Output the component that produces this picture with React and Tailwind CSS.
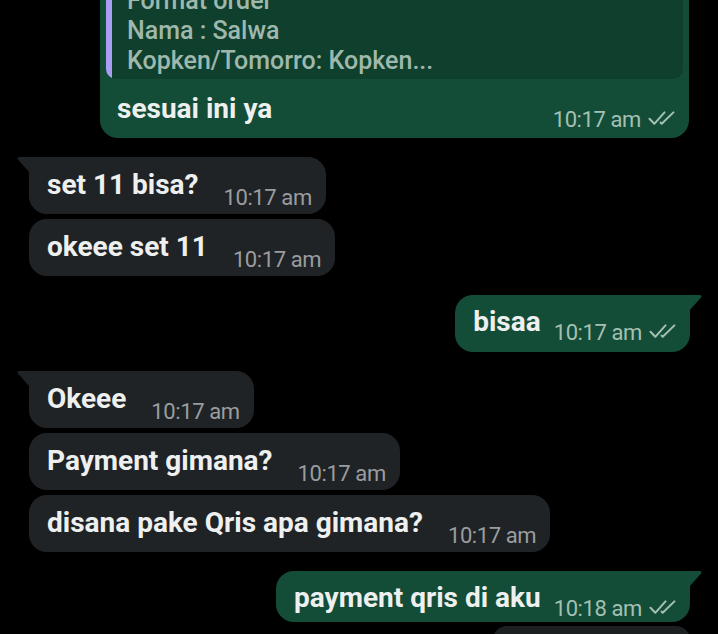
import React from 'react';

function Ticks({ className = '' }) {
  return (
    <svg viewBox="0 0 27 14" className={`h-[14px] w-[27px] shrink-0 ${className}`} fill="none">
      <path d="M1.5 7.8l4.8 5L16.5 1.4" stroke="#a3c0b3" strokeWidth="2" strokeLinecap="round" strokeLinejoin="round" />
      <path d="M12.6 11.6l1.1 1.2L25.4 1.4" stroke="#a3c0b3" strokeWidth="2" strokeLinecap="round" strokeLinejoin="round" />
    </svg>
  );
}

function Incoming({ text, tail, gap }) {
  return (
    <div
      className={`relative ml-[29px] flex h-[57px] items-start self-start rounded-[18px] bg-[#202326] pl-[18px] pr-[14px] ${gap} ${tail ? 'rounded-tl-none' : ''}`}
    >
      {tail && (
        <svg viewBox="0 0 13 16" className="absolute -left-[12px] top-0 h-[16px] w-[13px]">
          <path d="M2.2 0H13V16L0.9 2.6C0.1 1.6 0.6 0 2.2 0Z" fill="#202326" />
        </svg>
      )}
      <span className="mt-[11px] text-[28px] font-bold leading-[33px] text-[#eef0f0]">{text}</span>
      <span className="ml-[25px] mt-[28px] text-[22px] leading-[25px] tracking-[-0.4px] text-[#9a9d9f]">10:17 am</span>
    </div>
  );
}

function Outgoing({ text, time, tail, gap, height }) {
  return (
    <div
      className={`relative mr-[28px] flex items-start self-end rounded-[18px] bg-[#144d37] pl-[18px] pr-[14px] ${gap} ${height} ${tail ? 'rounded-tr-none' : ''}`}
    >
      {tail && (
        <svg viewBox="0 0 13 16" className="absolute -right-[12px] top-0 h-[16px] w-[13px]">
          <path d="M10.8 0H0V16L12.1 2.6C12.9 1.6 12.4 0 10.8 0Z" fill="#144d37" />
        </svg>
      )}
      <span className="mt-[10px] text-[28px] font-bold leading-[33px] text-[#eef0f0]">{text}</span>
      <span className="ml-[13px] mt-[25px] text-[22px] leading-[25px] tracking-[-0.4px] text-[#a3c0b3]">{time}</span>
      <Ticks className="ml-[7px] mt-[29px]" />
    </div>
  );
}

export default function App() {
  return (
    <div className="h-[634px] w-[718px] overflow-hidden bg-black font-[Roboto,sans-serif]">
      <div className="flex flex-col">
        {/* pesan dengan balasan, bagian atas terpotong */}
        <div className="-mt-[60px] ml-[100px] w-[589px] rounded-[18px] bg-[#144d37] pt-[6px]">
          <div className="mx-[6px] flex overflow-hidden rounded-[10px] bg-[#0f3f2d]">
            <div className="w-[6px] shrink-0 bg-[#a99ef2]" />
            <div className="pb-[3px] pl-[15px] pt-[10px] text-[25px] font-medium leading-[30px] text-[#9fb8ac]">
              <div className="text-[#a99ef2]">Anda</div>
              <div>Format order</div>
              <div>Nama : Salwa</div>
              <div>Kopken/Tomorro: Kopken...</div>
            </div>
          </div>
          <div className="flex h-[59px] items-start pl-[17px] pr-[14px]">
            <span className="mt-[13px] text-[28px] font-bold leading-[33px] text-[#eef0f0]">sesuai ini ya</span>
            <span className="ml-auto mt-[28px] text-[22px] leading-[25px] tracking-[-0.4px] text-[#a3c0b3]">10:17 am</span>
            <Ticks className="ml-[7px] mt-[32px]" />
          </div>
        </div>

        <Incoming text="set 11 bisa?" tail gap="mt-[19px]" />
        <Incoming text="okeee set 11" gap="mt-[5px]" />

        <Outgoing text="bisaa" time="10:17 am" tail gap="mt-[19px]" height="h-[57px]" />

        <Incoming text="Okeee" tail gap="mt-[19px]" />
        <Incoming text="Payment gimana?" gap="mt-[5px]" />
        <Incoming text="disana pake Qris apa gimana?" gap="mt-[5px]" />

        <Outgoing text="payment qris di aku" time="10:18 am" tail gap="mt-[19px]" height="h-[51px]" />

        <div className="mr-[28px] mt-[4px] h-[20px] w-[197px] self-end rounded-t-[14px] bg-[#1c2021]" />
      </div>
    </div>
  );
}
